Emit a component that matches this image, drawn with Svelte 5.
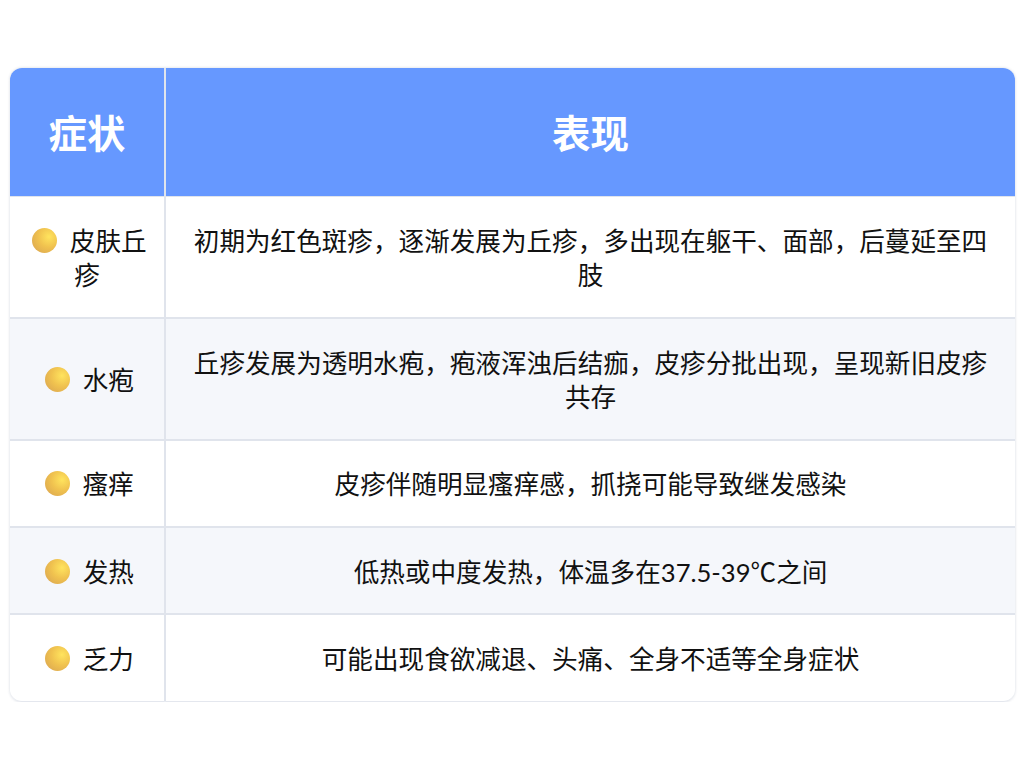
<script>
  const rows = [
    ['皮肤丘疹', '初期为红色斑疹，逐渐发展为丘疹，多出现在躯干、面部，后蔓延至四肢'],
    ['水疱', '丘疹发展为透明水疱，疱液浑浊后结痂，皮疹分批出现，呈现新旧皮疹共存'],
    ['瘙痒', '皮疹伴随明显瘙痒感，抓挠可能导致继发感染'],
    ['发热', '低热或中度发热，体温多在37.5-39℃之间'],
    ['乏力', '可能出现食欲减退、头痛、全身不适等全身症状']
  ];
</script>

<div class="page">
  <table>
    <colgroup>
      <col class="c1" />
      <col />
    </colgroup>
    <thead>
      <tr><th>症状</th><th>表现</th></tr>
    </thead>
    <tbody>
      {#each rows as r}
        <tr>
          <td class="sym"><span class="dot"></span>{r[0]}</td>
          <td>{r[1]}</td>
        </tr>
      {/each}
    </tbody>
  </table>
</div>

<style>
  :global(body) {
    margin: 0;
    background: #fff;
  }
  .page {
    padding: 68px 9px 0 10px;
    font-family: Lato, "Noto Sans CJK SC", sans-serif;
    color: #111;
  }
  table {
    width: 100%;
    table-layout: fixed;
    border-collapse: separate;
    border-spacing: 0;
    border-radius: 12px;
    box-shadow: 0 0 3px rgba(40, 60, 100, 0.2);
  }
  .c1 {
    width: 156px;
  }
  th {
    background: #6698ff;
    color: #fff;
    font-size: 38.4px;
    font-weight: 700;
    line-height: 1.35;
    padding: 40px 10px 36px;
    text-align: center;
    border-bottom: 1px solid #e0e4ec;
    border-right: 2px solid #e0e4ec;
  }
  th:first-child {
    border-top-left-radius: 12px;
  }
  th:last-child {
    border-top-right-radius: 12px;
  }
  th:last-child,
  td:last-child {
    border-right: 0;
  }
  td {
    font-size: 25.6px;
    line-height: 1.35;
    padding: 26.9px 25.6px 23.9px;
    text-align: center;
    border-bottom: 2px solid #e0e4ec;
    border-right: 2px solid #e0e4ec;
    background: #fff;
  }
  tr:last-child td {
    border-bottom: 1px solid #e4e7ee;
  }
  tr:last-child td:first-child {
    border-bottom-left-radius: 12px;
  }
  tr:last-child td:last-child {
    border-bottom-right-radius: 12px;
  }
  tbody tr:nth-child(even) td {
    background: #f5f7fb;
  }
  td.sym {
    padding-left: 12px;
    padding-right: 12px;
  }
  .dot {
    display: inline-block;
    width: 25px;
    height: 25px;
    border-radius: 50%;
    margin: 0 12.5px 0 5px;
    vertical-align: -2px;
    background: radial-gradient(circle at 68% 35%, #ffe45e 0%, #f0c24f 45%, #e2b050 75%, #e89a78 100%);
  }
</style>
